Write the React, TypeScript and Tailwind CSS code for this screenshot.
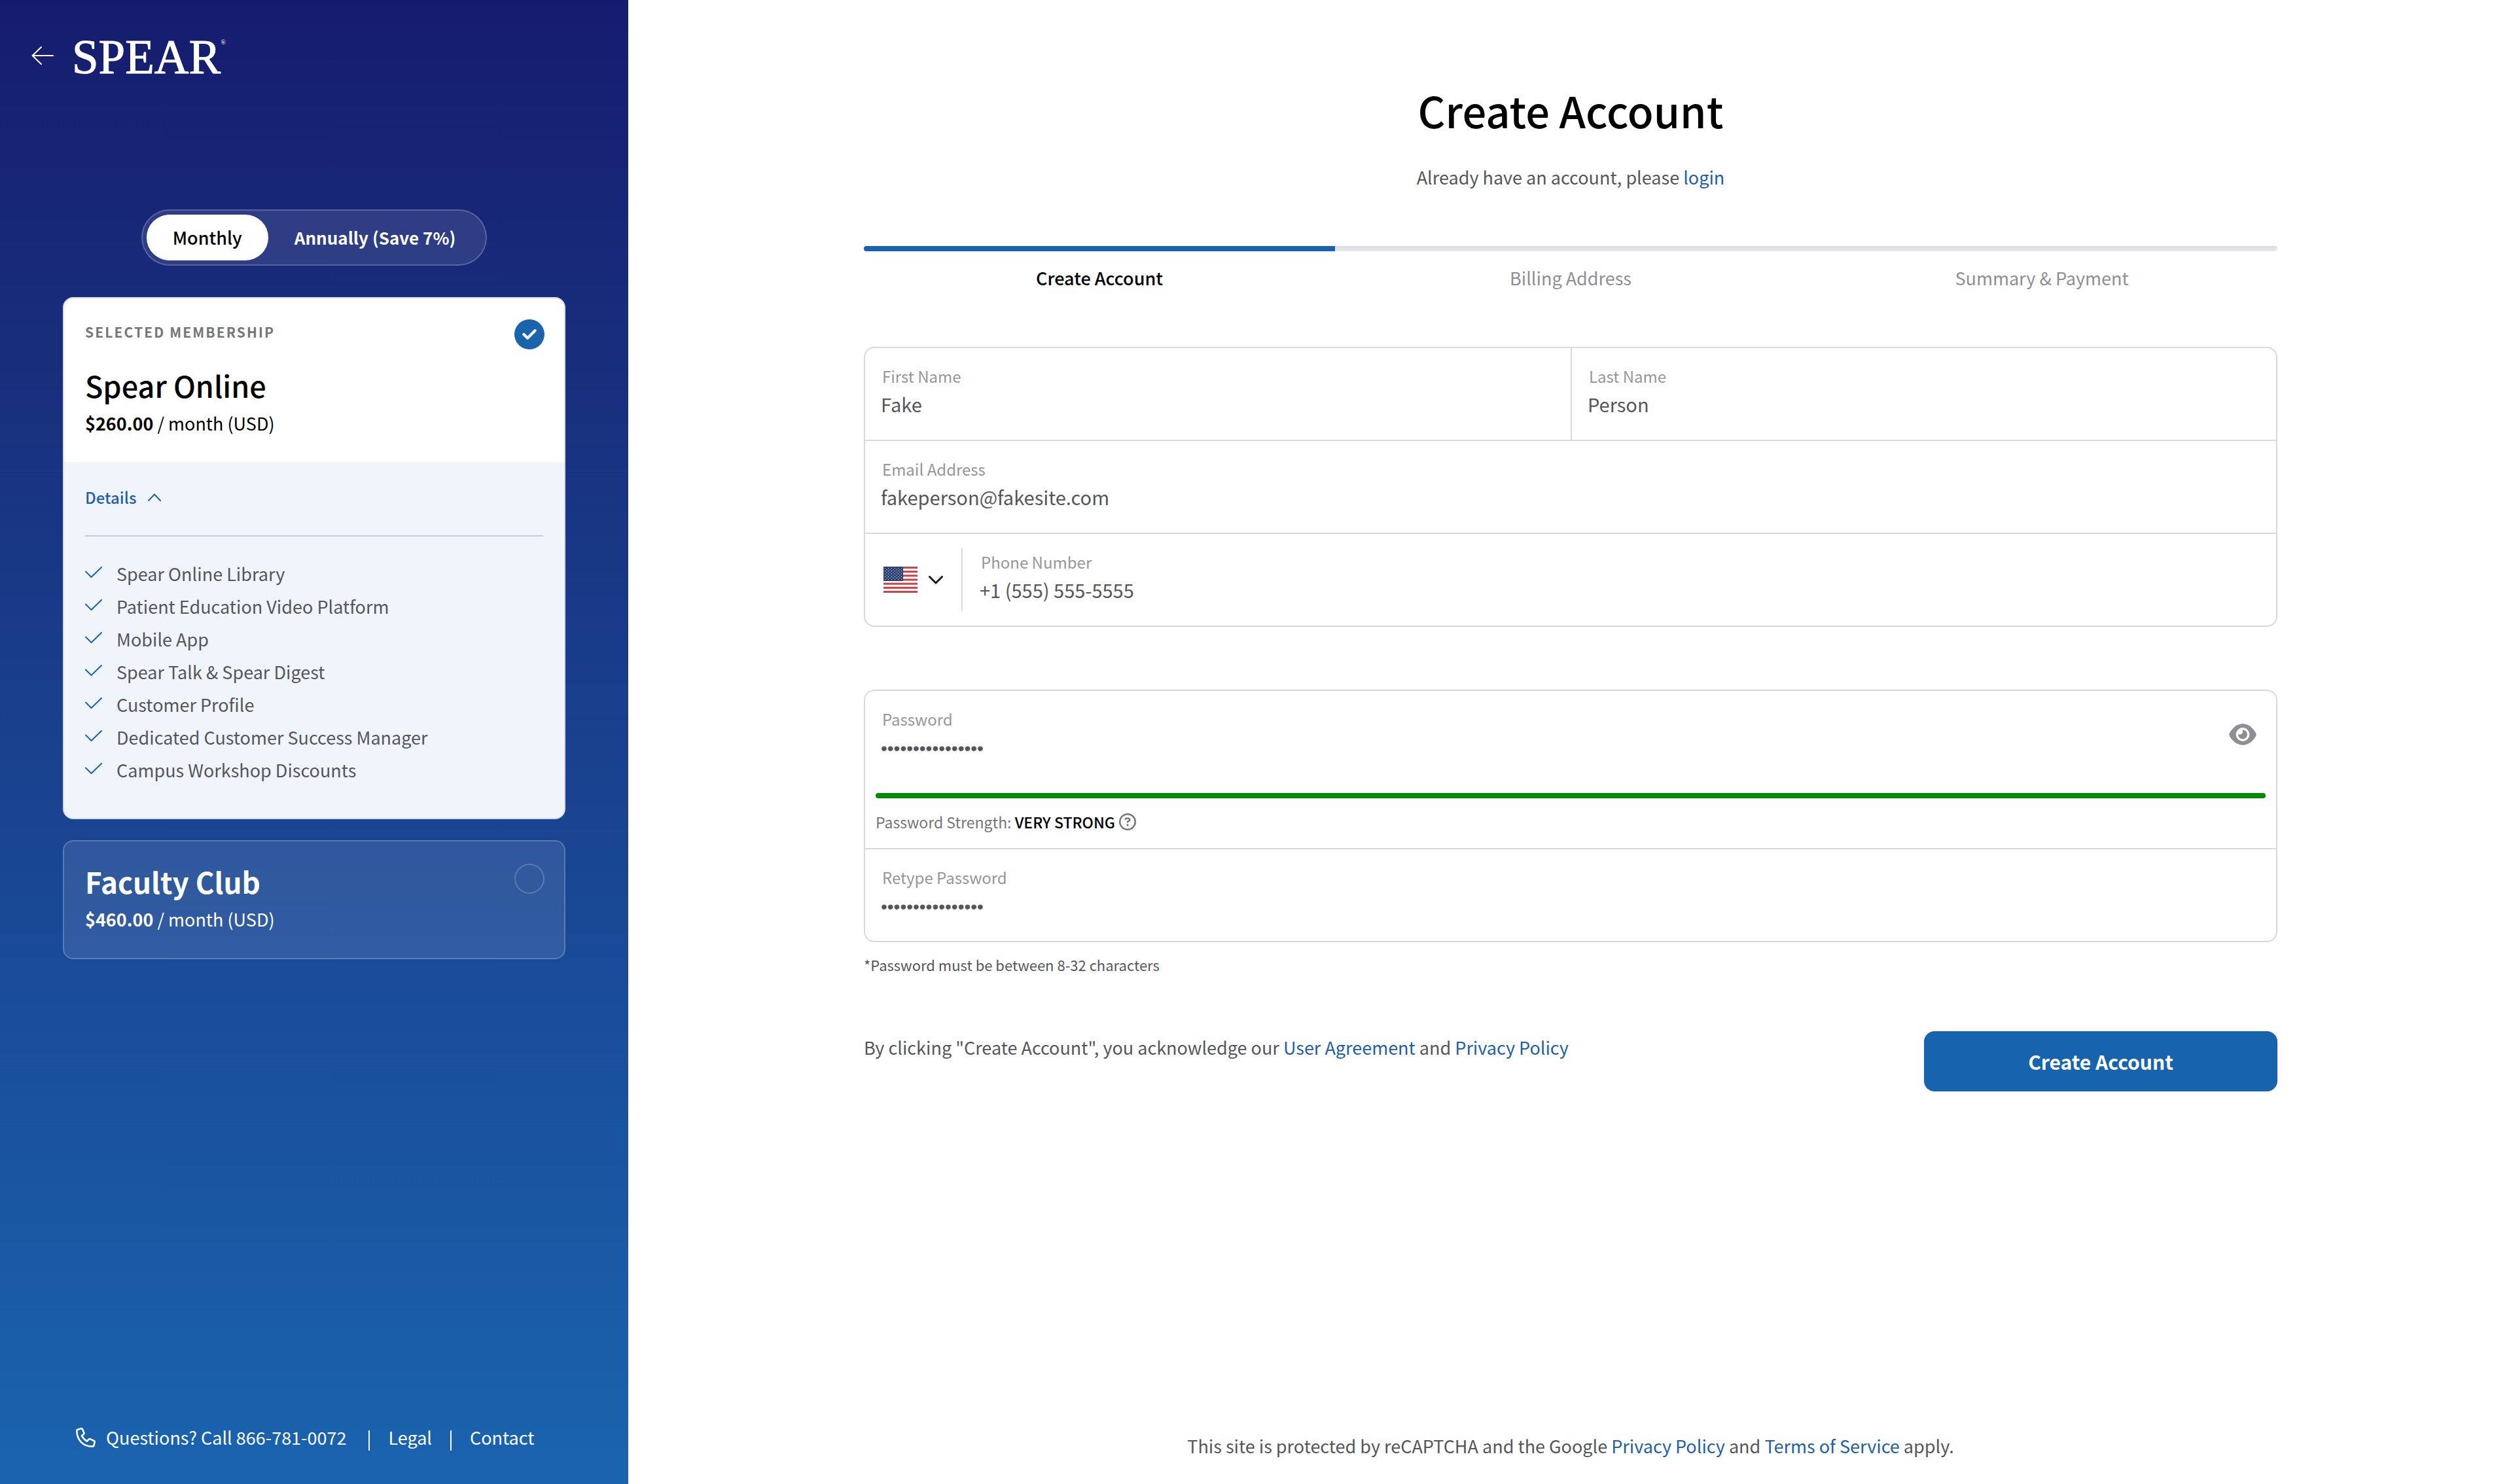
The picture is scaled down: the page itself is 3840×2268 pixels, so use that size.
import { FaCircleCheck, FaEye, FaRegCircleQuestion } from "react-icons/fa6";

const features = [
  "Spear Online Library",
  "Patient Education Video Platform",
  "Mobile App",
  "Spear Talk & Spear Digest",
  "Customer Profile",
  "Dedicated Customer Success Manager",
  "Campus Workshop Discounts",
];

function BackArrow() {
  return (
    <svg viewBox="0 0 34 28" className="w-[34px]" fill="none" stroke="currentColor" strokeWidth="2" strokeLinecap="round" strokeLinejoin="round">
      <path d="M33 14H1.5M15 1 1.5 14 15 27" />
    </svg>
  );
}

function Tick() {
  return (
    <svg viewBox="0 0 26 17" className="w-[26px]" fill="none" stroke="currentColor" strokeWidth="2" strokeLinecap="round" strokeLinejoin="round">
      <path d="M1 7.5 9.5 16 25 1" />
    </svg>
  );
}

function Phone() {
  return (
    <svg viewBox="0 0 90 90" className="w-[30px]" fill="none" stroke="currentColor" strokeWidth="8" strokeLinejoin="round">
      <path d="M7 9 24 4Q28 3 30 7L37 23Q38 27 35 30L27 37Q35 53 51 62L59 53Q62 50 66 52L83 60Q87 62 86 66L82 82Q81 86 77 86 42 86 22 64 4 44 4 13 4 10 7 9Z" />
    </svg>
  );
}

const stars = Array.from({ length: 9 }, (_, r) =>
  Array.from({ length: r % 2 ? 5 : 6 }, (_, c) => ({ x: (r % 2 ? 5 : 2.5) + c * 5, y: 2.6 + r * 2.1 })),
).flat();

function Flag() {
  return (
    <svg viewBox="0 0 52 40" className="w-[52px]">
      <rect width="52" height="40" fill="#fff" />
      {[0, 1, 2, 3, 4, 5, 6].map((i) => (
        <rect key={i} y={i * 6.15} width="52" height="3.08" fill="#c4474f" />
      ))}
      <rect width="30" height="22" fill="#2b3f70" />
      {stars.map((s, i) => (
        <circle key={i} cx={s.x} cy={s.y} r="0.7" fill="#dfe3ee" />
      ))}
    </svg>
  );
}

type FieldProps = { id: string; label: string; value: string; type?: string };

function Field({ id, label, value, type = "text" }: FieldProps) {
  return (
    <div className="flex min-w-0 flex-1 flex-col px-6 pt-6 pb-8">
      <label htmlFor={id} className="pl-0.5 text-[24px] leading-[38px] text-[#96969a]">
        {label}
      </label>
      {type === "password" ? (
        <input
          id={id}
          type="password"
          defaultValue={value}
          className="h-[46px] w-full bg-transparent pt-1.5 font-['Liberation_Sans',sans-serif] text-[28px] text-[#55565a] outline-none"
        />
      ) : (
        <input id={id} type={type} defaultValue={value} className="h-[46px] w-full bg-transparent text-[29px] leading-[46px] text-[#55565a] outline-none" />
      )}
    </div>
  );
}

function Price({ amount }: { amount: string }) {
  return (
    <p className="mt-[7px] text-[27px] leading-10">
      <span className="font-bold">{amount}</span> / month (USD)
    </p>
  );
}

function Sidebar() {
  return (
    <aside className="flex w-1/4 flex-col bg-linear-to-b from-[#161c6d] to-[#1a64af] px-12 text-white">
      <header className="flex items-start gap-7 pt-12">
        <a href="#back" aria-label="Back" className="flex h-[74px] items-center">
          <BackArrow />
        </a>
        <a href="#home" className="flex items-start font-['Liberation_Serif',serif]">
          <span className="text-[73px] leading-20 [-webkit-text-stroke:1px_white]">SPEAR</span>
          <span className="text-[10px] leading-[34px]">®</span>
        </a>
      </header>

      <div className="mt-48 flex self-center rounded-full border-2 border-white/20 bg-white/10 p-1.5 leading-[70px]">
        <button type="button" aria-pressed="true" className="rounded-full bg-white px-10 text-[27px] font-medium text-black">
          Monthly
        </button>
        <button type="button" aria-pressed="false" className="rounded-full px-10 text-[26px] font-bold">
          Annually (Save 7%)
        </button>
      </div>

      <section className="mx-12 mt-12 overflow-hidden rounded-2xl border-2 border-[#d9dae3] bg-white text-black">
        <div className="pt-8 pr-[30px] pb-[39px] pl-8">
          <div className="flex items-start justify-between">
            <p className="text-[21px] leading-[38px] font-bold tracking-widest text-[#75767a]">SELECTED MEMBERSHIP</p>
            <FaCircleCheck className="size-[46px] text-[#1a63ad]" />
          </div>
          <h2 className="mt-6 text-[45px] leading-[62px] font-medium">Spear Online</h2>
          <Price amount="$260.00" />
        </div>
        <div className="bg-[#f0f5fc] px-8 pt-8 pb-12">
          <button type="button" aria-expanded="true" className="flex items-center gap-[18px] text-[24px] leading-11 font-medium text-[#225fa6]">
            Details
            <svg viewBox="0 0 20 12" className="w-5" fill="none" stroke="currentColor" strokeWidth="2" strokeLinecap="round" strokeLinejoin="round">
              <path d="M1 11 10 1.5 19 11" />
            </svg>
          </button>
          <hr className="mt-9 border-t-2 border-[#b9cfe6]" />
          <ul className="mt-8 text-[27px] leading-[50px] text-[#55565a]">
            {features.map((f) => (
              <li key={f} className="flex items-start gap-[22px]">
                <span className="mt-3.5 text-[#1a63ad]">
                  <Tick />
                </span>
                {f}
              </li>
            ))}
          </ul>
        </div>
      </section>

      <section className="mx-12 mt-8 flex items-start justify-between rounded-2xl border-2 border-white/20 bg-white/10 pt-[30px] pr-[30px] pb-[39px] pl-8">
        <div>
          <h2 className="text-[44px] leading-[62px] font-bold">Faculty Club</h2>
          <Price amount="$460.00" />
        </div>
        <input type="radio" aria-label="Select Faculty Club" className="mt-1 size-[46px] appearance-none rounded-full border-2 border-white/20" />
      </section>

      <footer className="mt-auto flex items-center pb-[51px] pl-[68px] text-[27px] leading-10">
        <a href="tel:8667810072" className="flex items-center gap-4">
          <Phone />
          Questions? Call 866-781-0072
        </a>
        <span className="mr-7 ml-[34px] h-[31px] w-0.5 self-end bg-white" />
        <a href="#legal">Legal</a>
        <span className="mx-7 h-[31px] w-0.5 self-end bg-white" />
        <a href="#contact">Contact</a>
      </footer>
    </aside>
  );
}

export default function App() {
  return (
    <div className="flex min-h-screen bg-white font-['Noto_Sans_CJK_SC',sans-serif]">
      <Sidebar />
      <main className="flex flex-1 flex-col items-center pt-32 pb-[38px]">
        <form className="w-3/4" onSubmit={(e) => e.preventDefault()}>
          <h1 className="text-center text-[65px] leading-20 font-medium text-black">Create Account</h1>
          <p className="mt-10 text-center text-[27px] leading-[46px] text-[#55565a]">
            Already have an account, please{" "}
            <a href="#login" className="text-[#225fa6]">
              login
            </a>
          </p>

          <div className="mt-[82px] h-2 overflow-hidden rounded bg-linear-to-b from-[#dcdce0] to-[#ebebee]">
            <div className="h-full w-1/3 bg-[#1863ad]" />
          </div>
          <ol className="mt-5 grid grid-cols-3 text-center text-[27px] leading-[42px] text-[#8e8f94]">
            <li aria-current="step" className="font-medium text-black">
              Create Account
            </li>
            <li>Billing Address</li>
            <li>Summary &amp; Payment</li>
          </ol>

          <div className="mt-21 divide-y-2 divide-[#d9d9de] rounded-2xl border-2 border-[#d9d9de]">
            <div className="grid grid-cols-2">
              <Field id="first" label="First Name" value="Fake" />
              <div className="flex border-l-2 border-[#d9d9de]">
                <Field id="last" label="Last Name" value="Person" />
              </div>
            </div>
            <div className="flex">
              <Field id="email" label="Email Address" value="fakeperson@fakesite.com" type="email" />
            </div>
            <div className="flex items-center">
              <div className="relative flex items-center gap-[17px] pr-7 pl-7">
                <Flag />
                <svg viewBox="0 0 22 13" className="w-[22px] text-[#1c1c1e]" fill="none" stroke="currentColor" strokeWidth="3" strokeLinecap="round" strokeLinejoin="round">
                  <path d="M1.5 1.5 11 11 20.5 1.5" />
                </svg>
                <select aria-label="Country" className="absolute inset-0 size-full appearance-none opacity-0">
                  <option>US</option>
                </select>
              </div>
              <span className="mr-0.5 h-24 w-0.5 bg-[#d9d9de]" />
              <Field id="phone" label="Phone Number" value="+1 (555) 555-5555" type="tel" />
            </div>
          </div>

          <div className="mt-24 divide-y-2 divide-[#d9d9de] rounded-2xl border-2 border-[#d9d9de]">
            <div className="pb-5">
              <div className="flex items-start pr-[30px]">
                <Field id="password" label="Password" value="passwordpassword" type="password" />
                <button type="button" aria-label="Show password" className="mt-12">
                  <FaEye className="h-[37px] w-[42px] text-[#8e8f94]" />
                </button>
              </div>
              <div className="mx-4 mt-4 h-2 rounded bg-[#008a00]" />
              <p className="mx-4 mt-4 flex items-center gap-1.5 text-[23px] leading-10 text-[#75767a]">
                <span>
                  Password Strength: <span className="font-medium text-black">VERY STRONG</span>
                </span>
                <FaRegCircleQuestion className="size-[26px]" />
              </p>
            </div>
            <div className="flex">
              <Field id="retype" label="Retype Password" value="passwordpassword" type="password" />
            </div>
          </div>
          <p className="mt-3.5 text-[22px] leading-10 text-[#55565a]">*Password must be between 8-32 characters</p>

          <div className="mt-[82px] flex items-start justify-between">
            <p className="mt-1 text-[27px] leading-[42px] text-[#55565a]">
              By clicking "Create Account", you acknowledge our{" "}
              <a href="#agreement" className="text-[#225fa6]">
                User Agreement
              </a>{" "}
              and{" "}
              <a href="#privacy" className="text-[#225fa6]">
                Privacy Policy
              </a>
            </p>
            <button type="submit" className="h-23 w-1/4 rounded-2xl bg-[#1863ad] text-[30px] font-bold text-white">
              Create Account
            </button>
          </div>
        </form>

        <footer className="mt-auto text-[27px] leading-10 text-[#55565a]">
          This site is protected by reCAPTCHA and the Google{" "}
          <a href="#google-privacy" className="text-[#225fa6]">
            Privacy Policy
          </a>{" "}
          and{" "}
          <a href="#terms" className="text-[#225fa6]">
            Terms of Service
          </a>{" "}
          apply.
        </footer>
      </main>
    </div>
  );
}
